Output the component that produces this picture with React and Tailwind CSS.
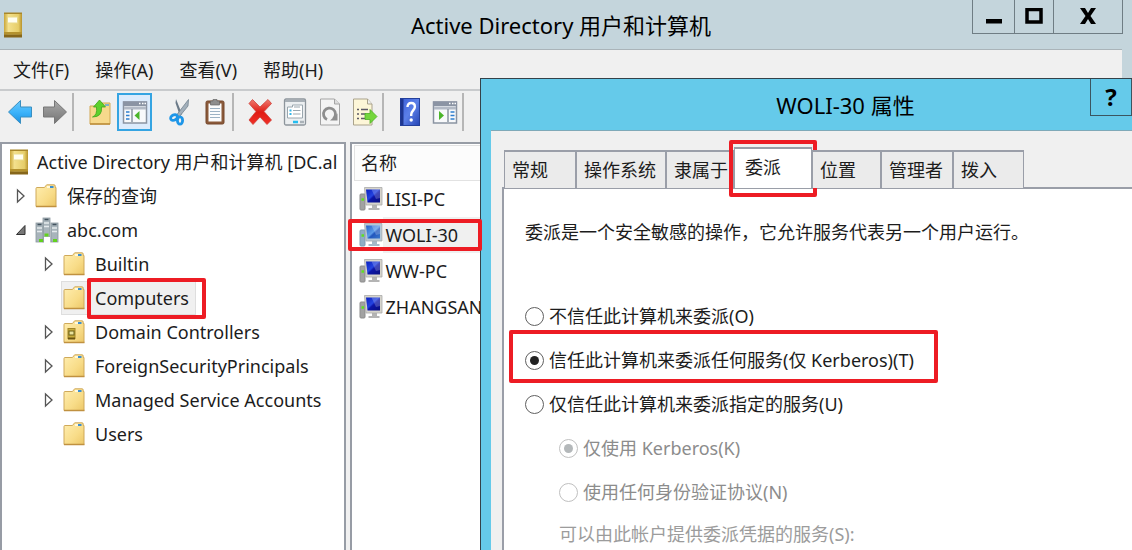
import React from "react";

const MENUS = ["文件(F)", "操作(A)", "查看(V)", "帮助(H)"];

const COMPUTERS = [
  { name: "LISI-PC" },
  { name: "WOLI-30", selected: true },
  { name: "WW-PC" },
  { name: "ZHANGSAN" },
];

const CHILDREN = [
  { name: "Builtin", arrow: true },
  { name: "Computers", selected: true },
  { name: "Domain Controllers", arrow: true, badge: true },
  { name: "ForeignSecurityPrincipals", arrow: true },
  { name: "Managed Service Accounts", arrow: true },
  { name: "Users" },
];

const TABS = [
  { name: "常规", width: "w-[72px]" },
  { name: "操作系统", width: "w-[90px]" },
  { name: "隶属于", width: "w-[68px]" },
  { name: "委派", width: "w-[78px]", active: true },
  { name: "位置", width: "w-[69px]" },
  { name: "管理者", width: "w-[72px]" },
  { name: "拨入", width: "w-[71px]" },
];

function BookIcon() {
  return (
    <svg width="20" height="26" viewBox="0 0 20 26" className="shrink-0" aria-hidden="true">
      <defs>
        <linearGradient id="book" x1="0" x2="1">
          <stop offset="0" stopColor="#c9a63a" />
          <stop offset="0.25" stopColor="#f3e08c" />
          <stop offset="0.8" stopColor="#e6cd68" />
          <stop offset="1" stopColor="#b8932c" />
        </linearGradient>
      </defs>
      <rect x="1" y="1" width="18" height="24" fill="url(#book)" />
      <rect x="1" y="0.5" width="18" height="1.5" fill="#a8872a" />
      <rect x="1" y="20" width="18" height="2.5" fill="#b4922e" />
      <rect x="1" y="22.5" width="18" height="3" fill="#86661a" />
      <rect x="4.5" y="5" width="10" height="6" fill="#fffef0" stroke="#e9d989" />
    </svg>
  );
}

function FolderIcon({ badge }) {
  return (
    <svg width="22" height="24" viewBox="0 0 22 24" className="shrink-0" aria-hidden="true">
      <defs>
        <linearGradient id="folder" x1="0" y1="0" x2="1" y2="1">
          <stop offset="0" stopColor="#ffeeb0" />
          <stop offset="0.6" stopColor="#f8dc88" />
          <stop offset="1" stopColor="#ecc768" />
        </linearGradient>
      </defs>
      <path d="M1 4.500q0-1 1-1h7.500l1.500-2q.3-.7 1-.7h7q1.200 0 1.200 1.200v1.500h.8v19H1z" fill="url(#folder)" stroke="#cfa95a" />
      <path d="M12 2h4.500v2H12z" fill="#fff8dc" />
      <path d="M15 2h3.500v2H15z" fill="#3c8fd0" />
      <path d="M1 22.500h20.500" stroke="#c09140" strokeWidth="1.500" />
      {badge && (
        <g>
          <rect x="5" y="8.500" width="7" height="10" fill="#c8ad3c" stroke="#a28528" />
          <rect x="6" y="11" width="5" height="4" fill="#e9e29c" stroke="#6c6018" />
          <path d="M5 18.500h7" stroke="#6c5410" strokeWidth="2" />
        </g>
      )}
    </svg>
  );
}

function DomainIcon() {
  const towers = [
    [8, 1],
    [1, 6],
    [16, 6],
  ];
  return (
    <svg width="24" height="26" viewBox="0 0 24 26" className="shrink-0" aria-hidden="true">
      {towers.map(([x, y]) => (
        <g key={x}>
          <rect x={x} y={y} width="7" height={25 - y} fill="#a8b4bb" stroke="#8b979e" strokeWidth="0.800" />
          <path d={`M${x + 1.500} ${y + 1.500}h4`} stroke="#42525e" strokeWidth="1.500" />
          <path d={`M${x + 1} ${y + 5}h5M${x + 1} ${y + 8.500}h5`} stroke="#e5eaed" strokeWidth="1.500" />
        </g>
      ))}
      <path d="M9 20h6v6H9z" fill="#fff" />
      <path d="M9.500 16.500h4v3h-4zM4 22h4v3H4zM18 22h4v3h-4z" fill="#62d21e" />
    </svg>
  );
}

function ArrowMark({ open }) {
  return (
    <svg width="12" height="16" viewBox="0 0 12 16" className="shrink-0" aria-hidden="true">
      {open ? (
        <path d="M10 3.500v9H1.500z" fill="#777" stroke="#333" />
      ) : (
        <path d="M2.500 2v12l6.500-6z" fill="#fff" stroke="#555" strokeWidth="1.300" />
      )}
    </svg>
  );
}

function ComputerIcon({ tint }) {
  return (
    <svg width="24" height="26" viewBox="0 0 24 26" className="shrink-0" aria-hidden="true">
      <defs>
        <linearGradient id="screen" x1="0" y1="0" x2="1" y2="1">
          <stop offset="0" stopColor="#0a1fc0" />
          <stop offset="0.450" stopColor="#2444e0" />
          <stop offset="0.550" stopColor="#0c16a8" />
          <stop offset="1" stopColor="#0a0f80" />
        </linearGradient>
        <linearGradient id="screenTint" x1="0" y1="0" x2="1" y2="1">
          <stop offset="0" stopColor="#2560c8" />
          <stop offset="0.500" stopColor="#5b9be8" />
          <stop offset="0.600" stopColor="#2257bd" />
          <stop offset="1" stopColor="#3b78cc" />
        </linearGradient>
      </defs>
      <path d="M1 9q0-1 1-1h4v15q0 1-1 1H2q-1 0-1-1z" fill={tint ? "#8fadc4" : "#a2a2a2"} stroke={tint ? "#7e9bb2" : "#8d8d8d"} />
      <path d="M2.500 13.500H5" stroke="#5de020" strokeWidth="2.500" />
      <path d="M13 19h5v3h2.500v2H9.500v-2H13z" fill={tint ? "#a5b9c8" : "#b4b4b4"} />
      <path d="M5.500 1.500H23v17.500H7z" fill={tint ? "#b5c9d8" : "#d6d4cc"} stroke="#aaa" strokeWidth="0.800" />
      <path d="M7 3.500h14v13H8.500z" fill={tint ? "url(#screenTint)" : "url(#screen)"} />
      <path d="M12.500 3.500H21V12l-4 1z" fill="#fff" opacity="0.220" />
    </svg>
  );
}

function ArrowIcon({ gray }) {
  return (
    <svg width="26" height="26" viewBox="0 0 26 26" aria-hidden="true">
      <defs>
        <linearGradient id="blueArrow" x1="0" y1="0" x2="0" y2="1">
          <stop offset="0" stopColor="#6cc8fa" />
          <stop offset="0.5" stopColor="#3db4fb" />
          <stop offset="1" stopColor="#1a8fe0" />
        </linearGradient>
        <linearGradient id="grayArrow" x1="0" y1="0" x2="0" y2="1">
          <stop offset="0" stopColor="#aaa" />
          <stop offset="1" stopColor="#747474" />
        </linearGradient>
      </defs>
      {gray ? (
        <path d="M1.500 8h11V1.500l12 11.500-12 11.500V18h-11z" fill="url(#grayArrow)" stroke="#777" strokeLinejoin="round" />
      ) : (
        <path d="M24.500 8h-11V1.500L1.500 13l12 11.500V18h11z" fill="url(#blueArrow)" stroke="#3a8fc0" strokeLinejoin="round" />
      )}
    </svg>
  );
}

function FolderUpIcon() {
  return (
    <svg width="24" height="28" viewBox="0 0 24 28" aria-hidden="true">
      <path d="M2 8h9l2-3h9v21H2z" fill="#f7d98c" stroke="#d3a855" />
      <path d="M2 26h20" stroke="#bb8d3a" strokeWidth="1.500" />
      <path d="M17 6h4v2h-4z" fill="#7fb2c8" />
      <path d="M4.500 19q5-2 4-10H5.500L11.500 2l6 7h-4q1 10-9 10z" fill="#5ed12c" stroke="#3da51a" strokeWidth="0.800" />
    </svg>
  );
}

function PaneIcon({ right }) {
  return (
    <svg width="26" height="26" viewBox="0 0 26 26" aria-hidden="true">
      <rect x="1.500" y="3" width="23" height="21" fill="#f8f9fb" stroke="#8b94a2" strokeWidth="1.500" />
      <rect x="1" y="2.500" width="24" height="4.500" fill="#8b94a4" />
      <path d="M17 4.500h1.500M20 4.500h1.500M22.500 4.500h1.500" stroke="#fff" strokeWidth="1.500" />
      <path d="M2 9h22" stroke="#b3bac6" strokeWidth="3" />
      {right ? (
        <g>
          <path d="M16 10v13" stroke="#8b94a2" strokeWidth="1.500" />
          <path d="M18.500 13h4M18.500 16.500h4M18.500 20h4" stroke="#2f7fd0" strokeWidth="1.500" />
          <path d="M7 12v9l5-4.500z" fill="#4bb52a" />
        </g>
      ) : (
        <g>
          <path d="M10 10v13" stroke="#8b94a2" strokeWidth="1.500" />
          <path d="M4 13h3.500M4 16.500h3.500M4 20h3.500" stroke="#2f7fd0" strokeWidth="1.500" />
          <path d="M17.500 12v9l-5-4.500z" fill="#4bb52a" />
        </g>
      )}
    </svg>
  );
}

function ScissorsIcon() {
  return (
    <svg width="24" height="28" viewBox="0 0 24 28" aria-hidden="true">
      <path d="M8 1l6 15-2 2L7.500 5z" fill="#6b7a88" />
      <path d="M20.500 1.500L9 16.500l2.500 2L20 8z" fill="#a3b0bb" stroke="#74838f" strokeWidth="0.800" />
      <ellipse cx="6" cy="19.500" rx="3.600" ry="2.600" fill="none" stroke="#1e96e8" strokeWidth="2.800" transform="rotate(-30 6 19.500)" />
      <ellipse cx="12" cy="22.500" rx="2.600" ry="3.700" fill="none" stroke="#1e96e8" strokeWidth="2.800" />
    </svg>
  );
}

function ClipboardIcon() {
  return (
    <svg width="22" height="28" viewBox="0 0 22 28" aria-hidden="true">
      <rect x="2" y="3" width="18" height="23" rx="1.500" fill="#8b5a3a" stroke="#74462a" />
      <path d="M4.500 5.500h13v18h-13z" fill="#fbfcfd" />
      <path d="M6 10.500h10M6 13.500h10M6 16.500h10M6 19.500h10" stroke="#9cb2c4" strokeWidth="1.200" />
      <path d="M6.500 3h2.500V1.500h4V3h2.500v4h-9z" fill="#8e8e8e" stroke="#666" strokeWidth="0.700" />
    </svg>
  );
}

function DeleteIcon() {
  return (
    <svg width="26" height="28" viewBox="0 0 26 28" aria-hidden="true">
      <defs>
        <linearGradient id="redX" x1="0" y1="0" x2="0" y2="1">
          <stop offset="0" stopColor="#ee7b70" />
          <stop offset="0.500" stopColor="#e01c14" />
          <stop offset="1" stopColor="#f03028" />
        </linearGradient>
      </defs>
      <path d="M5.500 1.500L13 9l8-7.500 3.500 4-7.500 8 7.500 8.500-4.500 4.500L13 19l-7 7.500-4-4.500 7-8.500-7-8z" fill="url(#redX)" stroke="#cf4038" strokeWidth="0.800" strokeLinejoin="round" />
    </svg>
  );
}

function PropertiesIcon() {
  return (
    <svg width="24" height="28" viewBox="0 0 24 28" aria-hidden="true">
      <rect x="1.500" y="1" width="21" height="26" rx="1.500" fill="#eceff1" stroke="#8d959c" strokeWidth="1.300" />
      <path d="M2 3h20" stroke="#a7afb6" strokeWidth="2" />
      <path d="M4.500 9h5V7h10v13h-15z" fill="#fff" stroke="#9aa6ae" />
      <path d="M6.500 12.500h2M6.500 16h2" stroke="#35b5e8" strokeWidth="1.800" />
      <path d="M10 12.500h7.500M10 16h7.500M11 9h6" stroke="#9ba7b0" strokeWidth="1.200" />
      <path d="M10 24h5" stroke="#24bdf0" strokeWidth="2.500" />
      <path d="M17 24h4" stroke="#aab2b8" strokeWidth="2.500" />
    </svg>
  );
}

function RefreshIcon() {
  return (
    <svg width="22" height="28" viewBox="0 0 22 28" aria-hidden="true">
      <path d="M1.500 1h14l5 5v21h-19z" fill="#f4f4f4" stroke="#a4a4a4" />
      <path d="M15.500 1v5h5" fill="#ddd" stroke="#a4a4a4" />
      <path d="M8 21.500a6 6 0 1 1 6.500-1" fill="none" stroke="#8e8e8e" strokeWidth="2.800" />
      <path d="M11 22.500h7.500v-7z" fill="#8e8e8e" />
    </svg>
  );
}

function ExportIcon() {
  return (
    <svg width="26" height="28" viewBox="0 0 26 28" aria-hidden="true">
      <path d="M1.500 1h14l4.500 5v21H1.500z" fill="#fdf6d8" stroke="#aaa38c" />
      <path d="M15.500 1v5H20" fill="#eee" stroke="#aaa38c" />
      <path d="M5 11.500h2M5 16h2M5 20.500h2M9 11.500h7M9 16h5M9 20.500h5" stroke="#5d5a66" strokeWidth="1.600" />
      <path d="M13 15.500h5v-4l7 7-7 7v-4h-5z" fill="#74d63c" stroke="#4bb025" strokeWidth="0.800" />
    </svg>
  );
}

function HelpIcon() {
  return (
    <svg width="22" height="28" viewBox="0 0 22 28" aria-hidden="true">
      <defs>
        <linearGradient id="help" x1="0" y1="0" x2="1" y2="1">
          <stop offset="0" stopColor="#3b5fd8" />
          <stop offset="0.500" stopColor="#5c80e8" />
          <stop offset="1" stopColor="#2444b4" />
        </linearGradient>
      </defs>
      <rect x="1.500" y="0.500" width="19" height="27" fill="url(#help)" stroke="#24409c" />
      <path d="M3 1v26" stroke="#1e3690" strokeWidth="3" />
      <path d="M8.500 9q0-4 3.700-4t3.700 3.800c0 3.200-3.700 4-3.700 7.700v1.500" fill="none" stroke="#fff" strokeWidth="2.400" />
      <circle cx="12.200" cy="22" r="1.700" fill="#fff" />
    </svg>
  );
}

function ToolButton({ label, active, children }) {
  return (
    <button
      type="button"
      aria-label={label}
      className={
        "flex h-[38px] w-[35px] shrink-0 items-center justify-center " +
        (active ? "border-2 border-[#35a4e2] bg-[#dcebfc]" : "")
      }
    >
      {children}
    </button>
  );
}

function Separator() {
  return <div className="mr-2 h-[38px] w-[2px] shrink-0 bg-[#b6b6b6]" />;
}

function Marker({ className }) {
  return <span aria-hidden="true" className={"pointer-events-none absolute rounded-[2px] border-4 border-[#ed1c24] " + className} />;
}

function Tree() {
  return (
    <nav className="w-[346px] shrink-0 overflow-hidden border-2 border-b-0 border-[#979ca5] bg-white pt-px whitespace-nowrap">
      <ul>
        <li>
          <div className="flex h-[34px] items-center gap-2 pl-[7px]">
            <BookIcon />
            <span>Active Directory 用户和计算机 [DC.al</span>
          </div>
          <ul>
            <li className="flex h-[34px] items-center pl-[13px]">
              <span className="w-5"><ArrowMark /></span>
              <FolderIcon />
              <span className="pl-[10px]">保存的查询</span>
            </li>
            <li>
              <div className="flex h-[34px] items-center pl-[13px]">
                <span className="w-5"><ArrowMark open /></span>
                <DomainIcon />
                <span className="pl-2">abc.com</span>
              </div>
              <ul className="pl-[41px]">
                {CHILDREN.map((c) => (
                  <li key={c.name} className="flex h-[34px] items-center">
                    <span className="w-[18px]">{c.arrow && <ArrowMark />}</span>
                    <div
                      className={
                        "relative flex h-[34px] items-center border px-px pr-[6px] " +
                        (c.selected ? "border-[#dedede] bg-[#f0f0f0]" : "border-transparent")
                      }
                    >
                      <FolderIcon badge={c.badge} />
                      <span className="pl-[10px]">{c.name}</span>
                      {c.selected && <Marker className="-top-[4px] -right-[11px] -bottom-[5px] left-[25px]" />}
                    </div>
                  </li>
                ))}
              </ul>
            </li>
          </ul>
        </li>
      </ul>
    </nav>
  );
}

function ComputerList() {
  return (
    <section className="flex-1 border-2 border-r-0 border-b-0 border-[#979ca5] bg-white px-[2px] pt-px">
      <table className="w-full border-collapse">
        <thead>
          <tr>
            <th className="h-[35px] border border-[#e2e2e2] bg-[#fcfcfc] p-0 pl-[6px] text-left font-normal">名称</th>
          </tr>
        </thead>
        <tbody>
          {COMPUTERS.map((c) => (
            <tr key={c.name}>
              <td className="h-9 p-0">
                <div className="relative flex h-9 items-center pl-1">
                  <ComputerIcon tint={c.selected} />
                  <span className={"flex h-9 flex-1 items-center pl-[3px] " + (c.selected ? "bg-[#f0f0f0]" : "")}>{c.name}</span>
                  {c.selected && <Marker className="top-[2px] -left-[7px] z-20 h-8 w-[134px]" />}
                </div>
              </td>
            </tr>
          ))}
        </tbody>
      </table>
    </section>
  );
}

function Radio({ id, group, checked, disabled, marked, children }) {
  return (
    <div className={"relative flex h-11 items-center gap-[5px] " + (disabled ? "text-[#8c8c8c]" : "")}>
      <input
        type="radio"
        id={id}
        name={group}
        defaultChecked={checked}
        disabled={disabled}
        className="grid size-[19px] shrink-0 appearance-none place-content-center rounded-full border border-[#606060] bg-white before:size-[9px] before:rounded-full before:content-[''] checked:before:bg-[#222] disabled:border-[#c0c0c0] disabled:checked:before:bg-[#b4b8ba]"
      />
      <label htmlFor={id}>{children}</label>
      {marked && <Marker className="-top-[8px] -right-[24px] -bottom-px -left-[16px]" />}
    </div>
  );
}

function PropertiesDialog() {
  return (
    <section
      aria-label="WOLI-30 属性"
      className="absolute top-[78px] -right-[78px] bottom-0 left-[480px] z-10 flex flex-col border-t border-l border-[#34424a] bg-[#65caea] whitespace-nowrap"
    >
      <header className="relative flex h-[51px] shrink-0 items-center justify-center">
        <h2 className="text-[22px] leading-none text-black">WOLI-30 属性</h2>
        <button
          type="button"
          className="absolute top-0 right-[78px] h-[37px] w-[42px] border border-t-0 border-[#3b5560] text-[24px] leading-[34px] font-bold text-black"
        >
          ?
        </button>
      </header>
      <div className="ml-[10px] flex flex-1 flex-col border-t border-[#7fa9b8] bg-[#f0f0f0] pt-4 pl-[11px]">
        <div role="tablist" className="relative z-10 flex h-[41px] shrink-0 items-end pl-[2px]">
          {TABS.map((t) => (
            <button
              key={t.name}
              type="button"
              role="tab"
              aria-selected={!!t.active}
              className={
                "relative shrink-0 border-x border-t-2 border-[#9a9ea8] text-left " +
                t.width +
                (t.active ? " h-[41px] bg-white pb-1 pl-[10px]" : " h-[38px] bg-[#ebebeb] pl-[7px]")
              }
            >
              {t.name}
              {t.active && <Marker className="-top-[9px] -right-[6px] -bottom-[9px] -left-[6px]" />}
            </button>
          ))}
        </div>
        <div className="-mt-px flex-1 border-t-2 border-l-2 border-[#9a9ea8] bg-white pl-[21px]">
          <p className="pt-[28px] pb-[47px] leading-[30px]">委派是一个安全敏感的操作，它允许服务代表另一个用户运行。</p>
          <div className="flex flex-col items-start">
            <Radio id="trust-none" group="trust">不信任此计算机来委派(O)</Radio>
            <Radio id="trust-any" group="trust" checked marked>信任此计算机来委派任何服务(仅 Kerberos)(T)</Radio>
            <Radio id="trust-some" group="trust">仅信任此计算机来委派指定的服务(U)</Radio>
          </div>
          <div className="pl-[34px]">
            <Radio id="proto-kerberos" group="proto" checked disabled>仅使用 Kerberos(K)</Radio>
            <Radio id="proto-any" group="proto" disabled>使用任何身份验证协议(N)</Radio>
            <p className="h-10 leading-10 text-[#9c9c9c]">可以由此帐户提供委派凭据的服务(S):</p>
          </div>
        </div>
      </div>
    </section>
  );
}

export default function App() {
  return (
    <main className="relative flex h-screen flex-col overflow-hidden bg-[#c4d5dc] pr-[10px] font-['Noto_Sans','Noto_Sans_CJK_SC',sans-serif] text-[18px] leading-[26px] text-[#1c1c1c]">
      <header className="grid h-[49px] shrink-0 grid-cols-[1fr_auto_1fr] items-center">
        <div className="pl-[3px]"><BookIcon /></div>
        <h1 className="text-[22px] leading-none text-black">Active Directory 用户和计算机</h1>
        <div className="-mr-px flex self-start justify-self-end border border-t-0 border-[#6f7d84]">
          <button type="button" aria-label="最小化" className="flex h-[33px] w-[42px] items-center justify-center border-r border-[#6f7d84]">
            <svg width="18" height="18" viewBox="0 0 18 18"><path d="M1 11h16v4.500H1z" /></svg>
          </button>
          <button type="button" aria-label="最大化" className="flex h-[33px] w-[39px] items-center justify-center border-r border-[#6f7d84]">
            <svg width="18" height="18" viewBox="0 0 18 18"><path d="M2 1.500h14v12.500H2z" fill="none" stroke="#000" strokeWidth="3.500" /></svg>
          </button>
          <button type="button" aria-label="关闭" className="flex h-[33px] w-[68px] items-center justify-center">
            <svg width="18" height="18" viewBox="0 0 18 18"><path d="M1 0h5l3 5 3-5h5l-5.500 8 5.500 8h-5l-3-5-3 5H1l5.500-8z" /></svg>
          </button>
        </div>
      </header>

      <div className="flex flex-1 flex-col border-t border-[#aab4b9] bg-[#f0f0f0]">
        <div role="menubar" className="flex h-[41px] shrink-0 items-center gap-[26px] border-b-2 border-[#c9cbcd] pl-[13px]">
          {MENUS.map((m) => (
            <button key={m} type="button" role="menuitem">{m}</button>
          ))}
        </div>
        <div role="toolbar" className="flex h-[51px] shrink-0 items-start pt-[2px] pl-[2px]">
          <ToolButton label="后退"><ArrowIcon /></ToolButton>
          <ToolButton label="前进"><ArrowIcon gray /></ToolButton>
          <Separator />
          <ToolButton label="上移一级"><FolderUpIcon /></ToolButton>
          <ToolButton label="显示控制台树" active><PaneIcon /></ToolButton>
          <div className="w-[10px] shrink-0" />
          <ToolButton label="剪切"><ScissorsIcon /></ToolButton>
          <ToolButton label="粘贴"><ClipboardIcon /></ToolButton>
          <Separator />
          <ToolButton label="删除"><DeleteIcon /></ToolButton>
          <ToolButton label="属性"><PropertiesIcon /></ToolButton>
          <ToolButton label="刷新"><RefreshIcon /></ToolButton>
          <ToolButton label="导出列表"><ExportIcon /></ToolButton>
          <Separator />
          <ToolButton label="帮助"><HelpIcon /></ToolButton>
          <ToolButton label="显示操作窗格"><PaneIcon right /></ToolButton>
          <Separator />
        </div>
        <div className="flex flex-1 gap-1">
          <Tree />
          <ComputerList />
        </div>
      </div>

      <PropertiesDialog />
    </main>
  );
}
